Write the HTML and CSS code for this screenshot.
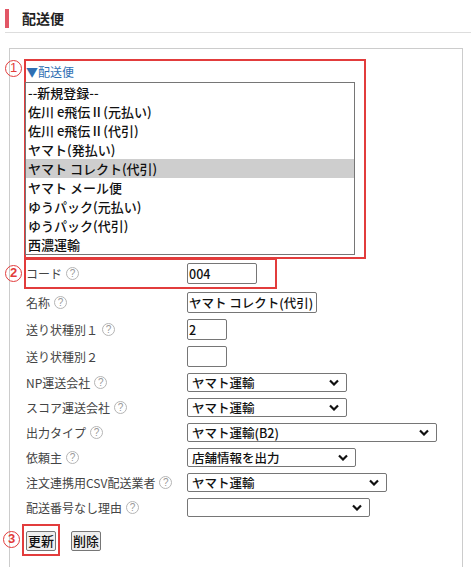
FILE: index.html
```html
<!DOCTYPE html>
<html lang="ja">
  <head>
    <meta charset="UTF-8" />
    <meta name="viewport" content="width=device-width, initial-scale=1.0" />
    <title>配送便</title>
    <link rel="stylesheet" href="styles.css">
  </head>
  <body>
    <div class="page-head">
      <h2 class="page-title">配送便</h2>
    </div>

    <div class="panel">
      <div class="mark mark-list">
        <span class="step">1</span>
        <a href="#" class="list-toggle">▼配送便</a>
        <div class="carrier-list" role="listbox">
          <div class="carrier">--新規登録--</div>
          <div class="carrier">佐川 e飛伝Ⅱ(元払い)</div>
          <div class="carrier">佐川 e飛伝Ⅱ(代引)</div>
          <div class="carrier">ヤマト(発払い)</div>
          <div class="carrier selected">ヤマト コレクト(代引)</div>
          <div class="carrier">ヤマト メール便</div>
          <div class="carrier">ゆうパック(元払い)</div>
          <div class="carrier">ゆうパック(代引)</div>
          <div class="carrier">西濃運輸</div>
        </div>
      </div>

      <div class="mark mark-code">
        <span class="step">2</span>
        <div class="field">
          <label for="code">コード<span class="help">?</span></label>
          <input type="text" id="code" class="w-code" value="004" />
        </div>
      </div>

      <div class="fields">
        <div class="field">
          <label for="name">名称<span class="help">?</span></label>
          <input type="text" id="name" class="w-name" value="ヤマト コレクト(代引)" />
        </div>
        <div class="field">
          <label for="slip1">送り状種別１<span class="help">?</span></label>
          <input type="text" id="slip1" class="w-short" value="2" />
        </div>
        <div class="field">
          <label for="slip2">送り状種別２</label>
          <input type="text" id="slip2" class="w-short" value="" />
        </div>
        <div class="field sel">
          <label for="np">NP運送会社<span class="help">?</span></label>
          <select id="np" class="w-160"><option>ヤマト運輸</option></select>
        </div>
        <div class="field sel">
          <label for="score">スコア運送会社<span class="help">?</span></label>
          <select id="score" class="w-160"><option>ヤマト運輸</option></select>
        </div>
        <div class="field sel">
          <label for="outType">出力タイプ<span class="help">?</span></label>
          <select id="outType" class="w-250"><option>ヤマト運輸(B2)</option></select>
        </div>
        <div class="field sel">
          <label for="sender">依頼主<span class="help">?</span></label>
          <select id="sender" class="w-169"><option>店舗情報を出力</option></select>
        </div>
        <div class="field sel">
          <label for="csv">注文連携用CSV配送業者<span class="help">?</span></label>
          <select id="csv" class="w-200"><option>ヤマト運輸</option></select>
        </div>
        <div class="field sel">
          <label for="noNumber">配送番号なし理由<span class="help">?</span></label>
          <select id="noNumber" class="w-183"><option></option></select>
        </div>
      </div>

      <div class="actions">
        <div class="mark mark-btn">
          <span class="step">3</span>
          <button type="button">更新</button>
        </div>
        <button type="button" class="btn-delete">削除</button>
      </div>
    </div>
  </body>
</html>
```

FILE: styles.css
```css
body {
  margin: 0;
  font-family: "Noto Sans CJK JP", "Noto Sans", sans-serif;
  font-size: 12px;
  color: #333;
  background: #fff;
}
.page-head {
  margin-left: 5px;
  padding: 9px 0 4px;
  border-bottom: 1px solid #ddd;
}
.page-title {
  margin: 0;
  height: 19px;
  line-height: 19px;
  padding-left: 13px;
  border-left: 4px solid #e25666;
  font-size: 14px;
  font-weight: bold;
  color: #222;
}
.panel {
  margin: 15px 8px 0 9px;
  padding: 10px 0 40px 14px;
  border: 1px solid #ccc;
}

/* red annotation frames */
.mark {
  position: relative;
  border: 2px solid #e23c3c;
  box-sizing: border-box;
}
.step {
  position: absolute;
  left: -21px;
  top: 5px;
  width: 17px;
  height: 17px;
  box-sizing: border-box;
  border: 1.5px solid #e23c3c;
  border-radius: 50%;
  color: #e23c3c;
  font-family: "Liberation Sans", sans-serif;
  font-size: 13px;
  font-weight: bold;
  line-height: 14px;
  text-align: center;
}
.mark-list {
  width: 342px;
  padding: 0 0 2px 0;
}
.mark-list .step {
  top: -1px;
  font-weight: normal;
}
.list-toggle {
  display: block;
  height: 21px;
  line-height: 21px;
  font-size: 12px;
  color: #2f6fb3;
  text-decoration: none;
}
.carrier-list {
  width: 330px;
  height: 173px;
  margin-left: -1px;
  box-sizing: border-box;
  border: 1px solid #767676;
  overflow: hidden;
  font-size: 13px;
  font-weight: 500;
  color: #111;
}
.carrier {
  height: 19px;
  line-height: 19px;
  padding-left: 2px;
  white-space: nowrap;
}
.carrier.selected {
  background: #cecece;
}

.mark-code {
  width: 253px;
  margin-top: -1px;
}
.fields {
  padding-left: 2px;
}
.field {
  display: grid;
  grid-template-columns: 161px auto;
  justify-content: start;
  align-items: center;
  padding: 3px 0;
}
.field label {
  display: flex;
  align-items: center;
  color: #444;
  white-space: nowrap;
}
.help {
  display: inline-block;
  width: 13px;
  height: 13px;
  margin-left: 4px;
  box-sizing: border-box;
  border: 1px solid #b5b5b5;
  border-radius: 50%;
  color: #999;
  font-family: "Liberation Sans", sans-serif;
  font-size: 10px;
  line-height: 11px;
  text-align: center;
}
input,
select {
  font-family: inherit;
  font-size: 12.5px;
  font-weight: 500;
  color: #111;
  box-sizing: border-box;
  border: 1px solid #767676;
  border-radius: 2px;
  background-color: #fff;
  margin: 0;
}
input {
  height: 21px;
  padding: 0 1px;
}
select {
  appearance: none;
  -webkit-appearance: none;
  height: 19px;
  padding: 0 22px 0 4px;
  line-height: 17px;
  background-image: url("data:image/svg+xml;charset=US-ASCII,%3Csvg%20xmlns%3D%22http%3A//www.w3.org/2000/svg%22%20width%3D%2210%22%20height%3D%227%22%3E%3Cpath%20d%3D%22M1%201.5l4%204%204-4%22%20fill%3D%22none%22%20stroke%3D%22%23111%22%20stroke-width%3D%222.2%22/%3E%3C/svg%3E");
  background-repeat: no-repeat;
  background-position: right 7px center;
  background-size: 10px 7px;
}
.w-code { width: 70px; }
.w-name { width: 130px; }
.w-short { width: 40px; }
.w-160 { width: 160px; }
.w-250 { width: 250px; }
.w-169 { width: 169px; }
.w-200 { width: 200px; }
.w-183 { width: 183px; }

.actions {
  display: flex;
  align-items: center;
  margin: 4px 0 0 -2px;
}
.mark-btn {
  padding: 5px 2px 3px;
}
button {
  height: 20px;
  padding: 0 1px;
  font-family: inherit;
  font-size: 13px;
  font-weight: 500;
  color: #111;
  background: #efefef;
  border: 1px solid #767676;
  border-radius: 2px;
  line-height: 18px;
}
.btn-delete {
  margin-left: 11px;
  margin-top: 2px;
}
```
